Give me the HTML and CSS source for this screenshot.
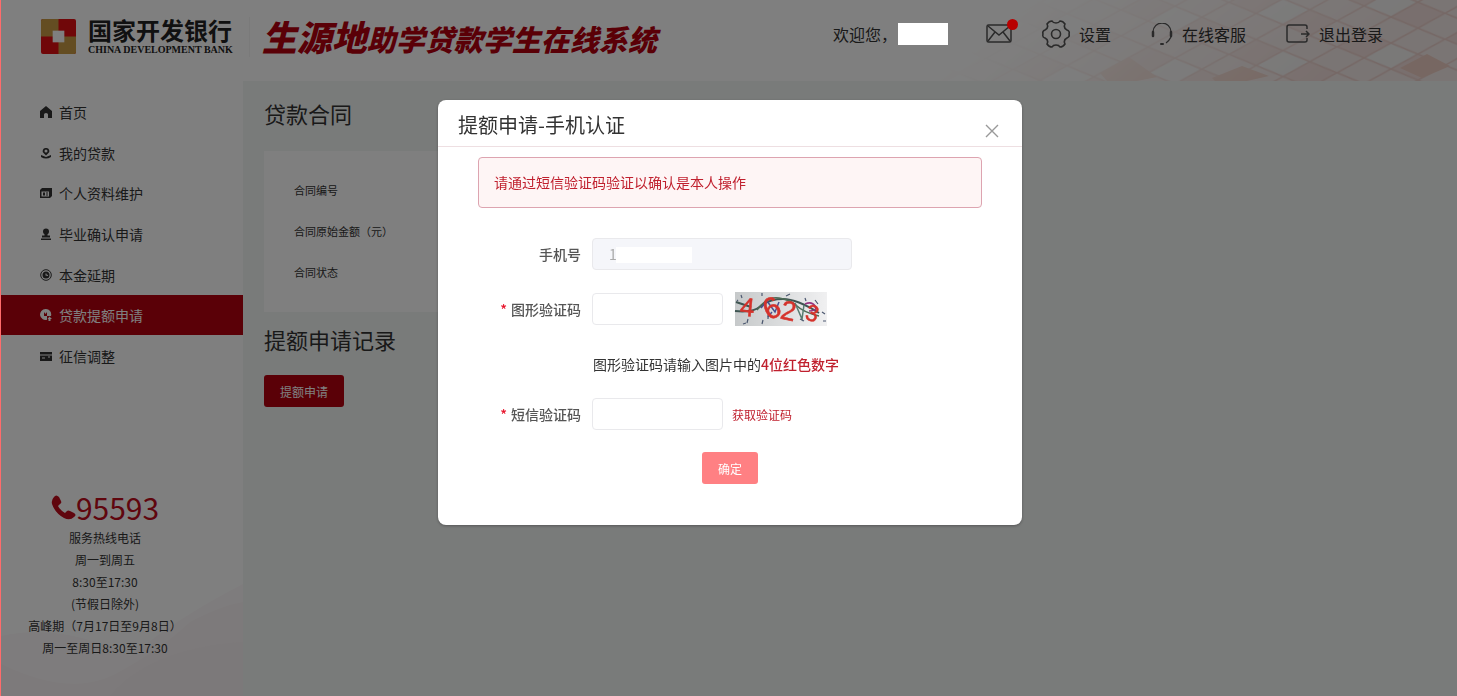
FILE: index.html
```
<!DOCTYPE html>
<html lang="zh-CN">
<head>
    <meta charset="UTF-8">
    <meta name="viewport" content="width=device-width, initial-scale=1.0">
    <title>生源地助学贷款学生在线系统</title>
    <link rel="stylesheet" href="styles.css">
</head>
<body>
    <!-- Header -->
    <header class="header">
        <svg class="header-bg" viewBox="0 0 560 81" aria-hidden="true">
            <defs>
                <linearGradient id="fadeX" gradientUnits="userSpaceOnUse" x1="180" y1="-40" x2="330" y2="150">
                    <stop offset="0" stop-color="#000"/>
                    <stop offset="0.6" stop-color="#999"/>
                    <stop offset="1" stop-color="#fff"/>
                </linearGradient>
                <mask id="fade"><rect width="560" height="81" fill="url(#fadeX)"/></mask>
                <pattern id="tiles" width="108" height="52" patternUnits="userSpaceOnUse" patternTransform="translate(8 12) skewY(-4)">
                    <rect width="108" height="52" fill="#f5eae8"/>
                    <path d="M27 0 54 13 27 26 0 13ZM81 26 108 39 81 52 54 39Z" fill="#f3dfdc"/>
                    <path d="M54 13 81 26 54 39 27 26Z" fill="#f4f2f1"/>
                    <path d="M0 13 81 52M27 0 108 39M81 0 108 13M0 39 27 52M27 0 0 13M81 0 0 39M108 13 27 52M108 39 81 52" fill="none" stroke="#ecd0cb" stroke-width="1.500"/>
                </pattern>
            </defs>
            <g mask="url(#fade)">
                <rect width="560" height="81" fill="url(#tiles)"/>
                <path d="M503 68 530 54 553 66 525 78ZM315 78 345 66 372 76 350 81H318ZM203 73 232 57 260 77 240 81H210Z" fill="#efcfc4"/>
            </g>
        </svg>
        <div class="brand">
            <svg class="logo" viewBox="0 0 36 36" aria-hidden="true">
                <rect width="36" height="36" rx="2" fill="#e00f12"/>
                <path d="M2 0H18V18H0V2Q0 0 2 0ZM18 18H36V34Q36 36 34 36H18Z" fill="#c89a44"/>
                <rect x="12" y="12" width="12" height="12" fill="#fff"/>
            </svg>
            <div class="bank">
                <span class="bank-cn">国家开发银行</span>
                <span class="bank-en">CHINA DEVELOPMENT BANK</span>
            </div>
            <h1 class="system-name"><span class="big">生源地</span>助学贷款学生在线系统</h1>
        </div>
        <nav class="header-nav">
            <span class="welcome">欢迎您，<span class="user-name"></span></span>
            <a href="#" class="mail" aria-label="消息">
                <svg width="26" height="20" viewBox="0 0 26 20" fill="none" stroke="#555" stroke-width="1.5">
                    <rect x="1" y="1" width="24" height="17" rx="1.5"/>
                    <path d="M2 2 13 11 24 2M2 17 9 8M24 17 17 8"/>
                </svg>
                <span class="badge"></span>
            </a>
            <a href="#" class="settings">
                <svg width="30" height="30" viewBox="0 0 30 30" fill="none" stroke="#555" stroke-width="1.6">
                    <path d="M11 2Q12 4 15 4T19 2Q22 2 24 5Q22 9 26 11Q29 12 28 15Q29 18 26 19Q22 21 24 25Q22 28 19 28Q18 26 15 26T11 28Q8 28 6 25Q8 21 4 19Q1 18 2 15Q1 12 4 11Q8 9 6 5Q8 2 11 2Z"/>
                    <circle cx="15" cy="15" r="4.5"/>
                </svg>
                设置
            </a>
            <a href="#" class="service">
                <svg width="22" height="22" viewBox="0 0 22 22" fill="none" stroke="#555" stroke-width="1.3">
                    <path d="M2 9A9 9 0 0 1 20 9M20 14Q18 18 15 20"/>
                    <path d="M2 9V13M20 9V13" stroke-width="2.5" stroke-linecap="round"/>
                    <path d="M10 21H12" stroke-width="2" stroke-linecap="round"/>
                </svg>
                在线客服
            </a>
            <a href="#" class="logout">
                <svg width="24" height="20" viewBox="0 0 24 20" fill="none" stroke="#555" stroke-width="1.5">
                    <path d="M21 5V3Q21 1 19 1H3Q1 1 1 3V16Q1 18 3 18H19Q21 18 21 16V14M15 10H23M20 7 23 10 20 13"/>
                </svg>
                退出登录
            </a>
        </nav>
    </header>

    <div class="layout">
        <!-- Sidebar -->
        <aside class="sidebar">
            <ul class="menu">
                <li><a href="#">
                    <svg class="icon" viewBox="0 0 12 12"><path d="M6 0 12 5V12H8V8.500Q8 7 6 7T4 8.500V12H0V5Z"/></svg>首页</a></li>
                <li><a href="#">
                    <svg class="icon" viewBox="0 0 12 12"><path fill-rule="evenodd" d="M6 1A3 3 0 0 1 8 6.500L6 8.500 4 6.500A3 3 0 0 1 6 1ZM6 2.500A1.500 1.500 0 1 0 6 5.500 1.500 1.500 0 1 0 6 2.500Z"/><path d="M1 8 6 10 11 8V10Q6 13 1 10Z"/></svg>我的贷款</a></li>
                <li><a href="#">
                    <svg class="icon" viewBox="0 0 12 12"><path fill-rule="evenodd" d="M2 1H12V9L10 11H0V3ZM1.500 4.500V9.500H9V4.500Z"/><path d="M3 5.500H5V8.500H3ZM6 5.500H8V6.500H6ZM6 7.500H8V8.500H6Z"/></svg>个人资料维护</a></li>
                <li><a href="#">
                    <svg class="icon" viewBox="0 0 12 12"><circle cx="6" cy="3.500" r="3"/><path d="M4.500 5H7.500V7.500H10V9.500H2V7.500H4.500ZM1 10.500H11V12H1Z"/></svg>毕业确认申请</a></li>
                <li><a href="#">
                    <svg class="icon" viewBox="0 0 12 12"><circle cx="6" cy="6" r="5.300" fill="none" stroke="currentColor" stroke-width="1"/><path fill-rule="evenodd" d="M6 2.500A3.500 3.500 0 1 0 6 9.500 3.500 3.500 0 1 0 6 2.500ZM5.500 4.500H6.500V5.500L8 6V7L5.500 6.500Z"/></svg>本金延期</a></li>
                <li class="active"><a href="#">
                    <svg class="icon" viewBox="0 0 12 12"><path fill-rule="evenodd" d="M5.500 0A5.500 5.500 0 1 0 7 10.800V7H11A5.500 5.500 0 0 0 5.500 0ZM4 3 5.500 5 7 3V7H4Z"/><path d="M9.500 7.500 12 10H10.500V12H8.500V10H7.500Z"/></svg>贷款提额申请</a></li>
                <li><a href="#">
                    <svg class="icon" viewBox="0 0 12 12"><path d="M0 2H12V4.500H0ZM0 5.500H12V11H0Z"/><path d="M2 8H5M8 7H10" stroke="#fff"/></svg>征信调整</a></li>
            </ul>
            <div class="hotline">
                <div class="hotline-number">
                    <svg width="25" height="25" viewBox="0 0 25 25" fill="#c00c1c" aria-hidden="true">
                        <path d="M3 2Q5 -1 8 2L10 6Q11 8 9 9L7 11Q9 15 14 18L16 16Q17 15 19 16L23 18Q26 20 23 22Q19 26 13 23Q4 18 1 9Q0 5 3 2Z"/>
                    </svg>95593
                </div>
                <p>服务热线电话</p>
                <p>周一到周五</p>
                <p>8:30至17:30</p>
                <p>(节假日除外)</p>
                <p>高峰期（7月17日至9月8日）</p>
                <p>周一至周日8:30至17:30</p>
            </div>
            <svg class="sidebar-bg" viewBox="0 0 243 120" preserveAspectRatio="none" aria-hidden="true">
                <path d="M0 60Q60 46 130 80Q180 40 243 8V120H0Z" fill="#fdf9fa"/>
                <path d="M0 88Q70 122 115 98T190 46Q220 30 243 26V120H0Z" fill="#faf4f6"/>
                <path d="M110 120Q150 72 243 66V120Z" fill="#f9f2f4"/>
            </svg>
        </aside>

        <!-- Content -->
        <main class="content">
            <h2 class="page-title">贷款合同</h2>
            <dl class="contract">
                <dt>合同编号</dt>
                <dt>合同原始金额（元）</dt>
                <dt>合同状态</dt>
            </dl>
            <h2 class="page-title">提额申请记录</h2>
            <button type="button" class="button">提额申请</button>
        </main>
    </div>

    <!-- Phone verification dialog -->
    <div class="overlay">
        <div class="dialog" role="dialog" aria-labelledby="dialogTitle">
            <div class="dialog-header">
                <h3 id="dialogTitle">提额申请-手机认证</h3>
                <button type="button" class="close" aria-label="关闭">
                    <svg width="14" height="14" viewBox="0 0 14 14" stroke="#999" stroke-width="1.4"><path d="M1 1 13 13M13 1 1 13"/></svg>
                </button>
            </div>
            <form class="dialog-body">
                <div class="alert">请通过短信验证码验证以确认是本人操作</div>
                <div class="form-row">
                    <label for="phone">手机号</label>
                    <div class="phone-field">
                        <input type="text" id="phone" class="input" value="1" disabled>
                        <span class="phone-mask"></span>
                    </div>
                </div>
                <div class="form-row">
                    <label for="captcha" class="required">图形验证码</label>
                    <input type="text" id="captcha" class="input short">
                    <svg class="captcha" viewBox="0 0 92 34" role="img" aria-label="图形验证码">
                        <defs>
                            <linearGradient id="paper"><stop offset="0" stop-color="#c6c9ca"/><stop offset="1" stop-color="#f0f0f1"/></linearGradient>
                        </defs>
                        <rect width="92" height="34" fill="url(#paper)"/>
                        <path d="M1 10 16 15M0 19Q18 21 26 14T48 7 84 21" fill="none" stroke="#3f5552" stroke-width="2"/>
                        <path d="M22 18Q32 4 44 6T62 14 84 24" fill="none" stroke="#4d6b55" stroke-width="1.5"/>
                        <path d="M26 16 32 9 40 20 44 10M33 25 37 20" fill="none" stroke="#46508f" stroke-width="1.5"/>
                        <path d="M60 11 67 27 69 13" fill="none" stroke="#577b70" stroke-width="1.5"/>
                        <path d="M70 12Q77 9 80 14T74 19" fill="none" stroke="#96347f" stroke-width="1.5"/>
                        <path d="M6 3 7 6M13 27 12 31M8 32 11 31M28 28 27 32M33 23 33 27M27 1V4M51 4 55 2M70 6 71 9M80 8 83 12M87 20 90 22M88 29H91M65 27 69 29M2 8 3 9" stroke="#4c5870" stroke-width="1.2"/>
                        <g fill="#d5332c" stroke="#d5332c" stroke-width="0.5" class="captcha-text">
                            <text x="5" y="24" font-size="26" transform="rotate(6 12 16)">4</text>
                            <text x="28" y="26" font-size="30" transform="rotate(-24 37 15)">6</text>
                            <text x="46" y="28" font-size="27" transform="rotate(12 53 19)">2</text>
                            <text x="71" y="29" font-size="23" transform="rotate(16 77 21)">3</text>
                        </g>
                    </svg>
                </div>
                <p class="hint">图形验证码请输入图片中的<span class="red">4位红色数字</span></p>
                <div class="form-row">
                    <label for="smsCode" class="required">短信验证码</label>
                    <input type="text" id="smsCode" class="input short">
                    <a href="#" class="get-code">获取验证码</a>
                </div>
                <button type="submit" class="button confirm">确定</button>
            </form>
        </div>
    </div>
</body>
</html>
```
FILE: styles.css
```
* {
    box-sizing: border-box;
}

body {
    margin: 0;
    min-height: 100vh;
    display: flex;
    flex-direction: column;
    border-left: 1px solid #ff6b6b;
    background-color: #f3f6f5;
    color: #333;
    font-family: "Noto Sans CJK SC", "Liberation Sans", sans-serif;
    font-size: 14px;
}

h1, h2, h3, p, ul, dl {
    margin: 0;
    padding: 0;
    font-weight: normal;
}

a {
    color: inherit;
    text-decoration: none;
}

button, input {
    font-family: inherit;
}

svg {
    display: block;
    flex-shrink: 0;
}

/* Header */
.header {
    position: relative;
    display: flex;
    justify-content: space-between;
    height: 81px;
    padding: 0 74px 0 40px;
    background-color: #fff;
}

.header-bg {
    position: absolute;
    top: 0;
    right: 0;
    width: 560px;
    height: 81px;
}

.brand {
    display: flex;
    align-items: center;
    height: 73px;
}

.logo {
    width: 35px;
    height: 35px;
}

.bank {
    display: flex;
    flex-direction: column;
    margin-left: 12px;
    padding-right: 16px;
    border-right: 1px solid #f4f4f4;
    color: #222;
    white-space: nowrap;
}

.bank-cn {
    font-size: 24px;
    font-weight: bold;
    line-height: 26px;
}

.bank-en {
    font-family: "Liberation Serif", serif;
    font-size: 10px;
    font-weight: bold;
    line-height: 14px;
}

.system-name {
    margin-left: 12px;
    color: #b4000f;
    font-size: 29px;
    font-style: italic;
    font-weight: 900;
    line-height: 40px;
    white-space: nowrap;
}

.system-name .big {
    font-size: 35px;
}

.header-nav {
    position: relative;
    display: flex;
    align-items: center;
    height: 68px;
    font-size: 16px;
    white-space: nowrap;
}

.header-nav a,
.welcome {
    display: flex;
    align-items: center;
}

.header-nav a {
    gap: 9px;
}

.user-name {
    position: relative;
    z-index: 20;
    width: 50px;
    height: 22px;
    margin-left: 1px;
    background-color: #fff;
}

.header-nav .mail {
    position: relative;
    margin-left: 38px;
}

.badge {
    position: absolute;
    top: -5px;
    right: -6px;
    z-index: 20;
    width: 11px;
    height: 11px;
    border-radius: 50%;
    background-color: #b80000;
}

.header-nav .settings {
    margin-left: 29px;
    gap: 8px;
}

.header-nav .service,
.header-nav .logout {
    margin-left: 40px;
}

/* Sidebar */
.layout {
    display: flex;
    flex: 1;
}

.sidebar {
    position: relative;
    width: 242px;
    flex-shrink: 0;
    padding-top: 11px;
    background-color: #fff;
}

.menu {
    display: flex;
    flex-direction: column;
    height: 284px;
    list-style: none;
}

.menu li {
    display: flex;
    flex: 1;
}

.menu a {
    display: flex;
    flex: 1;
    align-items: center;
    gap: 7px;
    padding-left: 39px;
}

.icon {
    width: 12px;
    height: 12px;
    fill: currentColor;
}

.menu .active {
    background-color: #b4000e;
    color: #fff;
}

.hotline {
    position: relative;
    z-index: 1;
    width: 208px;
    margin-top: 111px;
    font-size: 12px;
    line-height: 22px;
    text-align: center;
    white-space: nowrap;
}

.hotline-number {
    display: flex;
    align-items: center;
    justify-content: center;
    height: 40px;
    color: #c00c1c;
    font-size: 30px;
}

.sidebar-bg {
    position: absolute;
    bottom: 0;
    left: 0;
    width: 100%;
    height: 120px;
}

/* Content */
.content {
    flex: 1;
    padding: 12px 21px;
}

.page-title {
    font-size: 22px;
    line-height: 40px;
}

.contract {
    max-width: 700px;
    margin: 18px 0 7px;
    padding: 19px 30px;
    background-color: #fff;
    font-size: 11px;
    line-height: 41px;
}

.button {
    height: 32px;
    padding: 0 16px;
    border: none;
    border-radius: 3px;
    background-color: #b4000e;
    color: #fff;
    font-size: 12px;
    cursor: pointer;
}

.content .button {
    display: block;
    margin-top: 16px;
}

/* Dialog */
.overlay {
    position: fixed;
    inset: 0 0 0 1px;
    z-index: 10;
    padding-left: 2px;
    background-color: rgba(0, 0, 0, 0.5);
}

.dialog {
    width: 584px;
    max-width: 100%;
    margin: 100px auto 0;
    border-radius: 8px;
    background-color: #fff;
    box-shadow: 0 1px 3px rgba(0, 0, 0, 0.3);
}

.dialog-header {
    display: flex;
    justify-content: space-between;
    height: 47px;
    padding: 5px 20px 0;
    border-bottom: 1px solid #eedfe2;
}

.dialog-header h3 {
    font-size: 20px;
    line-height: 40px;
}

.close {
    width: 20px;
    height: 20px;
    margin-top: 16px;
    padding: 3px;
    border: none;
    background: none;
    cursor: pointer;
}

.dialog-body {
    display: flex;
    flex-direction: column;
    padding: 10px 40px 41px;
}

.alert {
    margin-bottom: 30px;
    padding: 0 15px;
    border: 1px solid #dda4b0;
    border-radius: 4px;
    background-color: #fef5f5;
    color: #c0202e;
    line-height: 49px;
}

.form-row {
    display: flex;
    align-items: center;
    margin-bottom: 22px;
}

.form-row label {
    width: 103px;
    margin-right: 11px;
    color: #555;
    font-weight: 500;
    text-align: right;
}

.required::before {
    content: "*";
    margin-right: 4px;
    color: #e8132b;
}

.input {
    width: 260px;
    height: 32px;
    padding: 0 16px;
    border: 1px solid #e9e9ec;
    border-radius: 4px;
    background-color: #fff;
    font-size: 14px;
}

.input.short {
    width: 131px;
}

.input:disabled {
    background-color: #f5f6fa;
    color: #aaa;
}

.phone-field {
    position: relative;
}

.phone-mask {
    position: absolute;
    top: 9px;
    left: 24px;
    width: 76px;
    height: 16px;
    background-color: #fff;
}

.captcha {
    width: 92px;
    height: 34px;
    margin-left: 12px;
    overflow: visible;
}

.captcha-text {
    font-family: "Liberation Sans", sans-serif;
}

.hint {
    margin: 0 0 18px 115px;
    line-height: 32px;
}

.red,
.get-code {
    color: #c0202e;
}

.red {
    font-weight: 500;
}

.get-code {
    margin-left: 9px;
    font-size: 12px;
}

.confirm {
    align-self: center;
    background-color: #ff8083;
}
```
